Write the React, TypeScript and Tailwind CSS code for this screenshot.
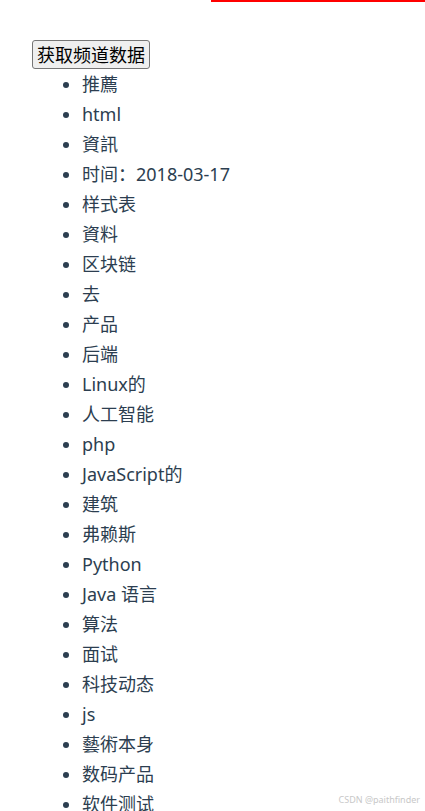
const CHANNELS = [
	"推薦",
	"html",
	"資訊",
	"时间：2018-03-17",
	"样式表",
	"資料",
	"区块链",
	"去",
	"产品",
	"后端",
	"Linux的",
	"人工智能",
	"php",
	"JavaScript的",
	"建筑",
	"弗赖斯",
	"Python",
	"Java 语言",
	"算法",
	"面试",
	"科技动态",
	"js",
	"藝術本身",
	"数码产品",
	"软件测试",
];

export default function App() {
	return (
		<div
			className="relative h-[811px] overflow-hidden bg-white text-[#2c3e50]"
			style={{ fontFamily: '"Noto Sans", "Noto Sans CJK SC", sans-serif' }}>
			<div className="ml-[211px] h-[2px] bg-[#ff0000]" />
			<div className="pl-[32px] pt-[38px]">
				<button
					type="button"
					className="h-[29px] rounded-[3px] border border-[#767676] bg-[#efefef] px-[4px] text-[18px] leading-[26px] text-black">
					获取频道数据
				</button>
				<ul className="list-disc pl-[50px]">
					{CHANNELS.map((name) => (
						<li key={name} className="h-[30px] text-[18px] leading-[30px]">
							{name}
						</li>
					))}
				</ul>
			</div>
			<span className="absolute bottom-[5px] right-[5px] text-[9px] text-[#c8c8c8]">
				CSDN @paithfinder
			</span>
		</div>
	);
}
